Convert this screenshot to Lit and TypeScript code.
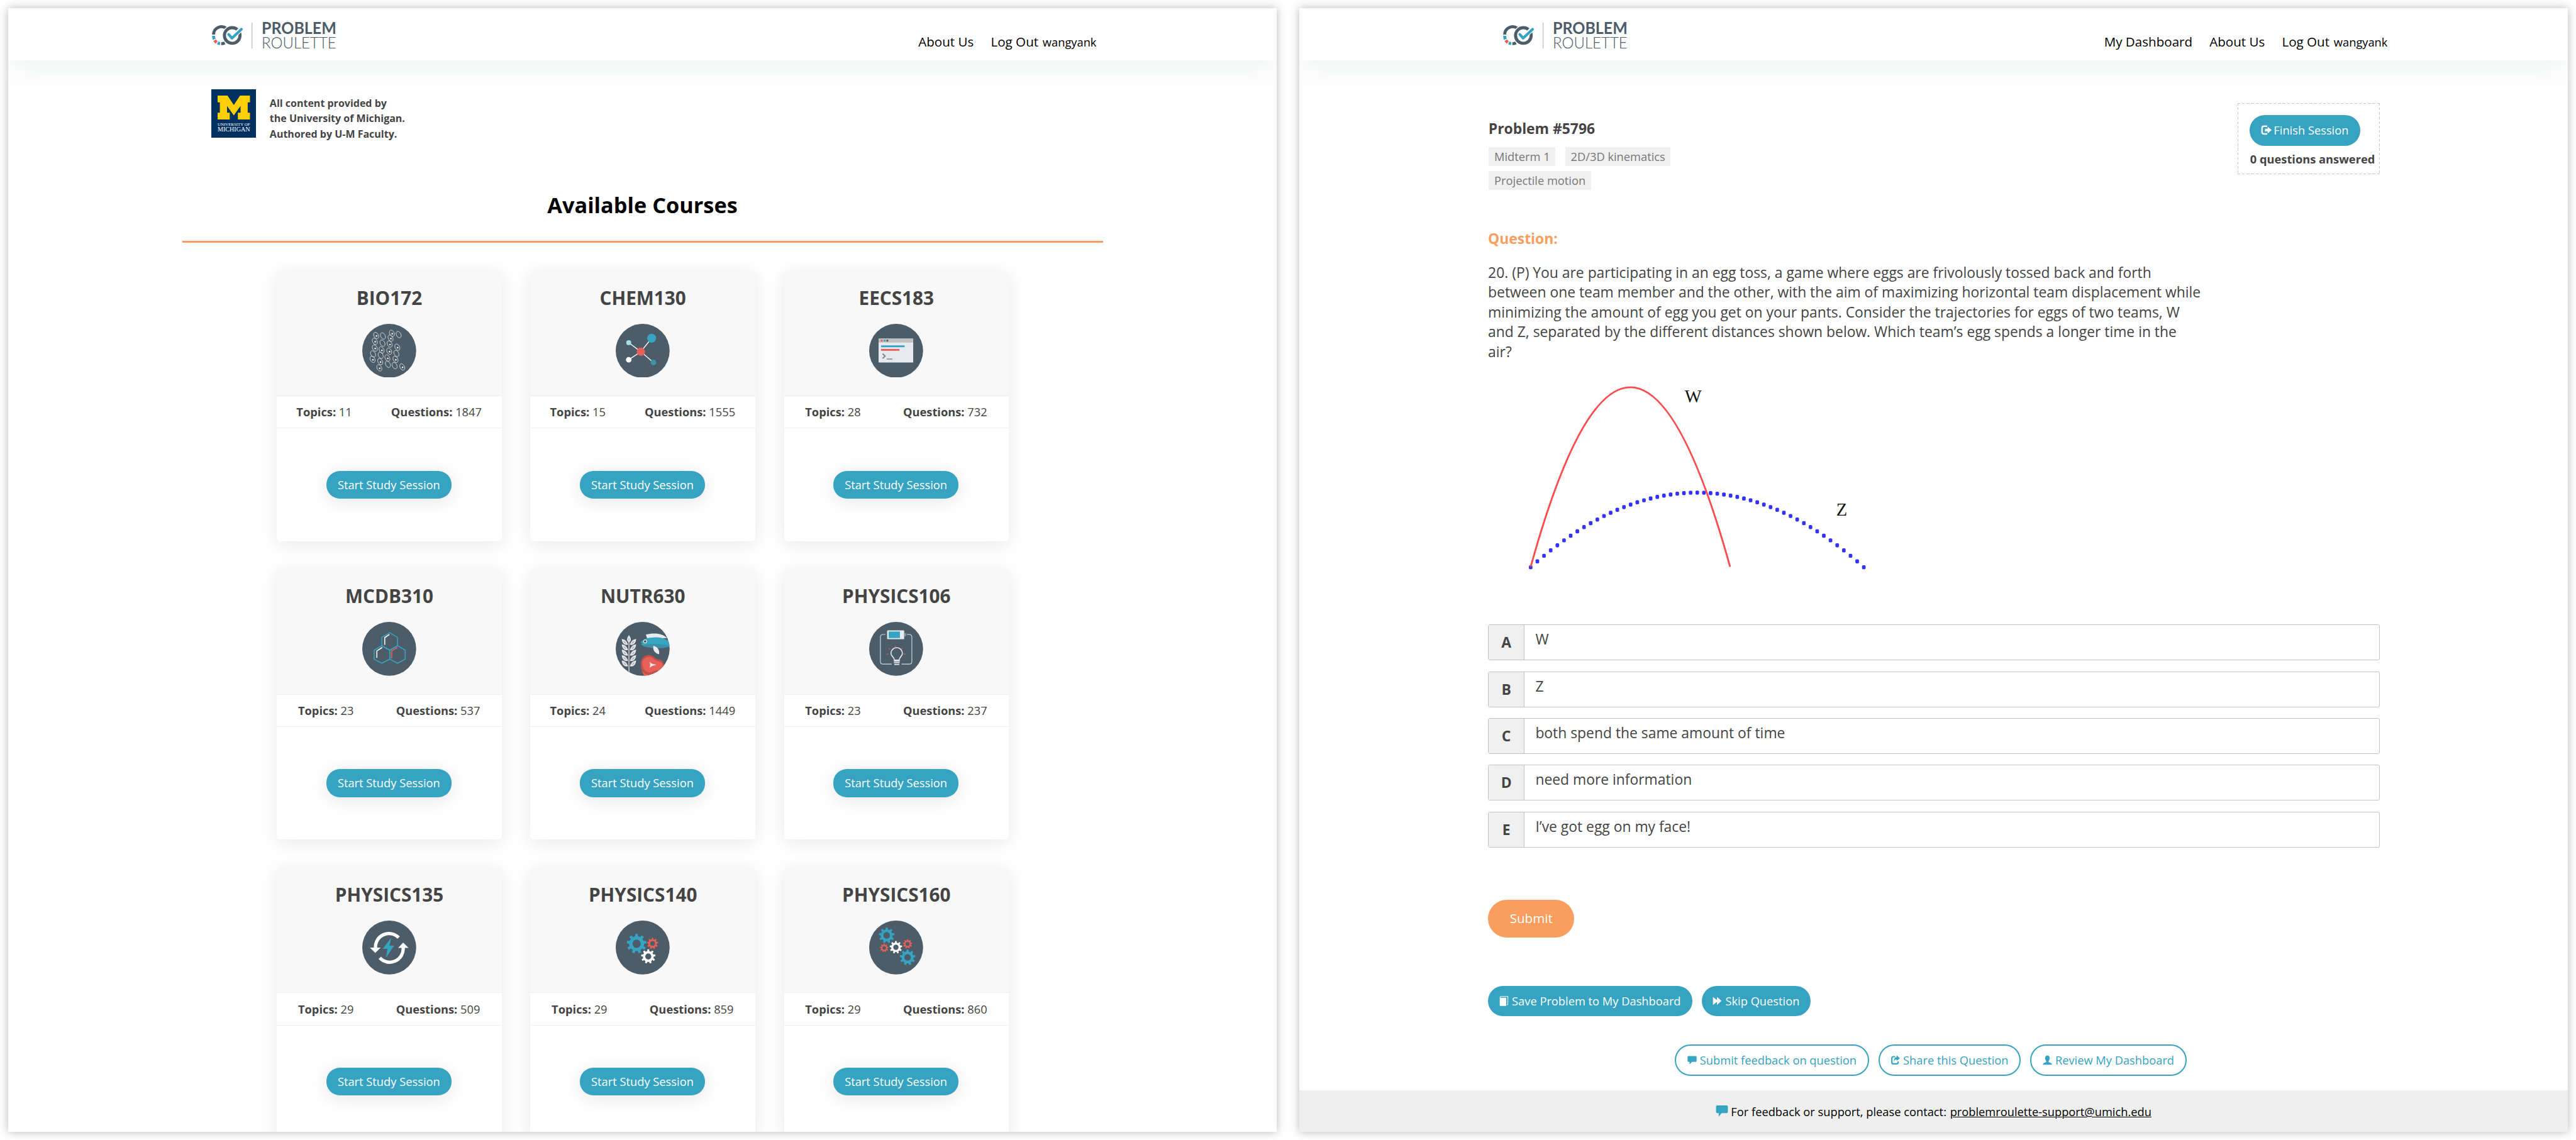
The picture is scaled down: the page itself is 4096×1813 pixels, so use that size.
import { LitElement, html, css, svg } from "lit";
import { customElement, property } from "lit/decorators.js";

const TEAL = "#35a3c1";
const SLATE = "#4c5c68";
const RED = "#e65f58";

// Closed outline of a gear: n teeth, outer radius r, centred on (cx, cy).
function gear(cx: number, cy: number, r: number, fill: string, n = 9) {
  const root = r * 0.76;
  const step = (Math.PI * 2) / n;
  const pts: string[] = [];
  for (let i = 0; i < n; i++) {
    const a = i * step - Math.PI / 2;
    const corners: [number, number][] = [
      [root, -0.27],
      [r, -0.19],
      [r, 0.19],
      [root, 0.27],
    ];
    for (const [rad, t] of corners) {
      const ang = a + t * step;
      pts.push(`${(cx + rad * Math.cos(ang)).toFixed(2)} ${(cy + rad * Math.sin(ang)).toFixed(2)}`);
    }
  }
  return svg`<path d="M${pts.join("L")}Z" fill=${fill}/><circle cx=${cx} cy=${cy} r=${r * 0.42} fill=${SLATE}/>`;
}

const CELLS: [number, number, number][] = [
  [31, 26, 1], [46, 27, 0], [66, 21, 1], [81, 24, 0], [28, 39, 1], [45, 43, 0],
  [63, 32, 1], [61, 45, 1], [78, 52, 1], [28, 54, 1], [43, 58, 1], [60, 61, 1],
  [76, 66, 0], [24, 67, 0], [41, 70, 0], [56, 76, 1], [23, 79, 1], [40, 84, 1],
  [57, 90, 0], [74, 79, 1], [72, 93, 0], [38, 98, 1], [89, 96, 1],
];

const wheatGrain = (x: number, y: number, flip: boolean) => svg`
  <g transform="translate(${x} ${y}) scale(${flip ? -1 : 1} 1)">
    <path d="M0 0C-3 -10 -8 -12 -14 -13C-13 -5 -10 1 0 0Z" fill="#e6e9ee"/>
    <path d="M-3.500 -2.500C-5 -7 -7 -8 -10.500 -9C-10 -5 -8 -3 -3.500 -2.500Z" fill="#b9b9b9"/>
  </g>`;

function artwork(name: string) {
  switch (name) {
    case "cells":
      return svg`<g fill="none" stroke="#dfe3e6" stroke-width="1.100">${CELLS.map(
        ([x, y, dot]) => svg`<ellipse cx=${x} cy=${y} rx="5" ry="7.600" transform="rotate(-28 ${x} ${y})"/>
          ${dot ? svg`<circle cx=${x + 0.8} cy=${y + 1} r="1.700" fill="#fff" stroke="none"/>` : ""}`
      )}</g>`;
    case "molecule":
      return svg`
        <path d="M29 42L56 62L80 32M29 80L56 62L84 86" stroke="#fff" stroke-width="2" fill="none"/>
        <circle cx="80" cy="32" r="10" fill=${TEAL}/><circle cx="29" cy="42" r="5.600" fill="#a3dbe8"/>
        <circle cx="56" cy="62" r="9.200" fill=${RED}/><circle cx="29" cy="80" r="6.200" fill="#fff"/>
        <circle cx="84" cy="86" r="6.200" fill="#428fa8"/>`;
    case "terminal":
      return svg`
        <rect x="21" y="33" width="77" height="53" rx="1" fill="#e6e9ee"/>
        <path d="M21 34a1 1 0 0 1 1-1h75a1 1 0 0 1 1 1v7.500H21z" fill="#c0c0c0"/>
        <circle cx="28" cy="37.300" r="2.300" fill=${RED}/><circle cx="34.500" cy="37.300" r="2.300" fill=${TEAL}/>
        <circle cx="40.500" cy="37.300" r="2.300" fill=${SLATE}/>
        <rect x="26.400" y="48" width="52.500" height="4" fill=${TEAL}/>
        <rect x="26.400" y="56" width="41" height="4" fill=${RED}/>
        <path d="M30 66.500L35.500 71.700L30 77" fill="none" stroke="#808080" stroke-width="2.600"/>
        <path d="M39 78.300H51.700" stroke="#808080" stroke-width="2"/>`;
    case "hexagons":
      return svg`<g fill="none" stroke-width="2.200">
        <g stroke=${TEAL}>
          <path d="M61 24L78.500 34.500V53L61 63L43.500 53V34.500Z"/>
          <path d="M43.500 53L61.500 63V83L43.500 92L26.500 83V63Z"/>
          <path d="M78.500 53L61.500 63V83L78.500 92L95.500 83V63Z"/>
        </g>
        <path d="M60.500 28L50 35V51M44.500 57L32.500 64.500V80" stroke="#fff"/>
        <path d="M78 57L65.500 64.500V81" stroke=${RED}/>
      </g>`;
    case "food":
      return svg`<defs><clipPath id="disc"><circle cx="60" cy="60" r="60"/></clipPath></defs>
      <g clip-path="url(#disc)">
        <path d="M29.500 44V120" stroke="#b9b9b9" stroke-width="2.600"/>
        ${[51, 63, 75, 87, 99].map((y) => svg`${wheatGrain(27.500, y, false)}${wheatGrain(31.500, y, true)}`)}
        <path d="M29.500 29.500C24 37 24 42 29.500 46C35 42 35 37 29.500 29.500Z" fill="#e6e9ee"/>
        <path d="M29.500 34.500C27.500 38 27.500 41 29.500 43C31.500 41 31.500 38 29.500 34.500Z" fill="#b9b9b9"/>
        <path d="M67 28.500C85 24 104 25 114 36L70 37Z" fill="#e6e9ee"/>
        <path d="M56 46C59 39 68 35 85 34.500C100 34 112 37 122 46V54C110 59 95 59 84 58C70 56 59 54 56 49L60 48Z" fill=${TEAL}/>
        <path d="M60 53C75 47 102 48 119 54C108 59 95 59 84 58C74 57 65 56 60 53Z" fill="#428fa8"/>
        <circle cx="65.500" cy="43.500" r="4" fill="#fff"/><circle cx="65.500" cy="43.500" r="2.600" fill="#3f4a52"/>
        <path d="M84 53C94 56 98 63 96.500 72C86 69 82 62 84 53Z" fill="#e6e9ee"/>
        <path d="M56 96C55 80 65 73.500 75 74C85 74.500 87 82 95 83.500C104 84 108 91 108 100L84 126C66 122 56 112 56 96Z" fill="#c24f49"/>
        <path d="M59 93C59 82 67 78 74 78C84 78 86 86 93 87.500C103 88 108 96 103 104C97 111 90 106 82 111C73 117 60 108 59 93Z" fill=${RED}/>
        <path d="M57 107C66 119 76 119 83 116C92 112 97 113 104 109L90 126H66Z" fill=${RED}/>
        <path d="M76 90C79 94 84 94.500 89 95.500C83 97 79 98 76 101.500C77.500 97 77.500 94 76 90Z" fill="#e6e9ee" stroke="#e6e9ee" stroke-width="1"/>
      </g>`;
    case "circuit":
      return svg`
        <path d="M36 28H31Q25 28 25 34V88Q25 94 31 94H50M72 94H89Q95 94 95 88V34Q95 28 89 28H84" fill="none" stroke="#d5dade" stroke-width="1.600"/>
        <rect x="40" y="19" width="38" height="19.500" rx="1.500" fill="#e6e9ee"/>
        <rect x="43.500" y="21.500" width="25" height="14.500" fill=${TEAL}/>
        <rect x="78" y="25" width="4" height="7" fill="#8c969e"/>
        <path d="M56 85C56 78 48.500 77 48.500 70A12.500 12.500 0 0 1 74 70C74 77 67 78 67 85Z" fill="none" stroke="#e6e9ee" stroke-width="2.200"/>
        <path d="M55 87H68M55 90.500H68M56 94.500H67" stroke="#e6e9ee" stroke-width="2.400"/>
        <path d="M58.500 53V57M43.500 58.500L46 61M74.500 58.500L72 61M39 71.500H43M77 71.500H81" stroke=${RED} stroke-width="1.600"/>`;
    case "energy":
      return svg`
        <g fill="none" stroke="#fff" stroke-width="7.400">
          <path d="M81 38A30 30 0 0 0 29.500 61"/><path d="M39 83A30 30 0 0 0 91 60"/>
        </g>
        <path d="M17 60H41L29 72ZM80 61H103L91 49Z" fill="#fff"/>
        <path d="M64.500 38L45.500 63H56L53 82.500L71 55.500H60.500Z" fill=${TEAL}/>`;
    case "gears":
      return svg`${gear(46.5, 51.5, 22, TEAL, 9)}${gear(82, 51, 12.5, RED)}${gear(72.500, 80, 16, "#fff")}`;
    default:
      return svg`${gear(39, 33, 17.5, TEAL)}${gear(85.500, 52, 10.5, RED)}${gear(33.500, 61, 9.5, RED)}
        ${gear(59.500, 59.500, 14, "#fff")}${gear(85.500, 82, 17.5, TEAL)}`;
  }
}

const GLYPHS: Record<string, unknown> = {
  out: svg`<path d="M14 2.500H6.500Q2.500 2.500 2.500 6.500V15.500Q2.500 19.500 6.500 19.500H14" fill="none" stroke="currentColor" stroke-width="3.400"/><path d="M9 8H15V3.500L24 11L15 18.500V14H9Z" fill="currentColor"/>`,
  book: svg`<path d="M1 3.500L3 1H19V18L17.500 20" fill="none" stroke="currentColor" stroke-width="1.600"/><rect x="1" y="4" width="14.500" height="18" rx="1" fill="currentColor"/>`,
  forward: svg`<path d="M1 2L10 9V2L20 11L10 20V13L1 20Z" fill="currentColor"/>`,
  comment: svg`<path d="M2.500 2H18.500Q20.500 2 20.500 4V13Q20.500 15 18.500 15H10L5 21V15H2.500Q.5 15 .5 13V4Q.5 2 2.500 2Z" fill="currentColor"/>`,
  share: svg`<path d="M10.500 3.500H6.500Q3 3.500 3 7V16Q3 19.500 6.500 19.500H13.500Q17 19.500 17 16V14" fill="none" stroke="currentColor" stroke-width="3"/><path d="M13.500 .500L21 7L13.500 13V9.500Q10 9.500 7.500 14Q7.500 5 13.500 4.500Z" fill="currentColor"/>`,
  user: svg`<path d="M10.500 1C14.500 1 15.500 4 15.500 7C15.500 10 14 12 13 13.500V15.500L18 17.500Q20.500 18.500 20.500 21.500H.5Q.5 18.500 3 17.500L8 15.500V13.500C7 12 5.500 10 5.500 7C5.500 4 6.500 1 10.500 1Z" fill="currentColor"/>`,
};

const glyph = (name: string) => html`<svg class="glyph ${name}" viewBox="0 0 24 22">${GLYPHS[name]}</svg>`;

@customElement("site-header")
class SiteHeader extends LitElement {
  @property({ type: Boolean }) dashboard = false;

  static styles = css`
    :host { display: block; }
    .bar {
      display: flex; justify-content: space-between; align-items: flex-start;
      box-sizing: border-box; height: 116px; padding: 17px 401px 0 452px;
      background: #fff; box-shadow: 0 20px 60px rgba(60, 80, 105, 0.07);
    }
    .logo { width: 290px; height: 90px; display: block; overflow: visible; }
    .nav { display: flex; gap: 38px; margin-top: 36px; font-size: 28.8px; line-height: 44px; color: #000; white-space: nowrap; }
    .user { font-size: 25.6px; margin-left: 2px; }
  `;

  render() {
    return html`<header class="bar">
      <svg class="logo" viewBox="470 35 290 90">
        <g fill="none" stroke-width="6.800">
          <path d="M503 63A17.500 17.500 0 0 0 475 77" stroke=${SLATE}/>
          <path d="M475 79.500A18 18 0 0 0 476.500 87.500" stroke=${TEAL}/>
          <path d="M477.500 89.500A18 18 0 0 0 482 94.500" stroke=${RED}/>
          <path d="M484 95.500A18 18 0 0 0 489.500 97" stroke=${TEAL}/>
          <path d="M492 97A18 18 0 0 0 500 95.500" stroke=${SLATE}/>
          <circle cx="516.500" cy="79" r="17.700" stroke="#fff" stroke-width="10"/>
          <circle cx="516.500" cy="79" r="17.400" stroke=${SLATE}/>
          <path d="M508.500 76L516 85L536 64.500" stroke="#fff" stroke-width="10.500" stroke-linecap="round"/>
          <path d="M508.500 76.500L516 85L537 65" stroke=${TEAL} stroke-width="6" stroke-linecap="round" stroke-linejoin="round"/>
        </g>
        <path d="M560.500 50V108" stroke="#9aa4ac" stroke-width="1.200"/>
        <text x="582" y="76" font-family="Lato, sans-serif" font-weight="700" font-size="36" textLength="166" lengthAdjust="spacingAndGlyphs" fill=${SLATE}>PROBLEM</text>
        <text x="582" y="108" font-family="Lato, sans-serif" font-weight="300" font-size="35" textLength="166" lengthAdjust="spacingAndGlyphs" fill=${SLATE}>ROULETTE</text>
      </svg>
      <nav class="nav">
        ${this.dashboard ? html`<span>My Dashboard</span>` : ""}
        <span>About Us</span>
        <span>Log Out <span class="user">wangyank</span></span>
      </nav>
    </header>`;
  }
}

@customElement("course-card")
class CourseCard extends LitElement {
  @property() name = "";
  @property({ type: Number }) topics = 0;
  @property({ type: Number }) questions = 0;
  @property() art = "";

  static styles = css`
    :host { display: block; }
    .card {
      display: flex; flex-direction: column; height: 600px; border-radius: 8px; overflow: hidden;
      background: #fff; box-shadow: 0 6px 40px rgba(0, 0, 0, 0.09);
    }
    .head {
      display: flex; flex-direction: column; align-items: center; gap: 29px;
      padding: 31px 0 40px; background: #f8f8f8; border-bottom: 2px solid #efefef;
    }
    .name { font-size: 41.6px; line-height: 56px; font-weight: 700; }
    .art { display: block; width: 120px; height: 120px; }
    .stats {
      display: flex; justify-content: space-around; align-items: center; box-sizing: border-box;
      height: 72px; padding: 0 1px 1px 0; border-bottom: 2px solid #efefef; font-size: 25.6px;
    }
    .foot { flex: 1; display: flex; align-items: center; justify-content: center; padding-right: 2px; }
    .start {
      box-sizing: border-box; width: 278px; height: 62px; border-radius: 30px; text-align: center;
      font-size: 25.6px; line-height: 61px; color: #fff; background: #35a3c1; font-weight: 500;
      box-shadow: 0 6px 40px rgba(0, 0, 0, 0.1);
    }
  `;

  render() {
    return html`<article class="card">
      <div class="head">
        <div class="name">${this.name}</div>
        <svg class="art" viewBox="0 0 120 120"><circle cx="60" cy="60" r="60" fill=${SLATE}/>${artwork(this.art)}</svg>
      </div>
      <div class="stats">
        <span><b>Topics:</b> ${this.topics}</span>
        <span><b>Questions:</b> ${this.questions}</span>
      </div>
      <div class="foot"><div class="start">Start Study Session</div></div>
    </article>`;
  }
}

@customElement("course-page")
class CoursePage extends LitElement {
  static styles = css`
    :host { display: block; }
    .intro { display: flex; gap: 30px; height: 224px; padding: 64px 0 0 452px; }
    .crest { display: block; width: 100px; height: 108px; }
    .credit { margin-top: 14.500px; font-size: 22.4px; line-height: 34.3px; font-weight: 700; }
    .title { text-align: center; font-size: 48px; line-height: 66px; font-weight: 700; color: #000; }
    .rule { width: 2048px; height: 4px; margin: 48px 0 64px 388px; background: #f99e5e; }
    .grid { display: grid; grid-template-columns: repeat(3, 500px); gap: 64px; padding-left: 598px; }
  `;

  courses = [
    ["BIO172", 11, 1847, "cells"],
    ["CHEM130", 15, 1555, "molecule"],
    ["EECS183", 28, 732, "terminal"],
    ["MCDB310", 23, 537, "hexagons"],
    ["NUTR630", 24, 1449, "food"],
    ["PHYSICS106", 23, 237, "circuit"],
    ["PHYSICS135", 29, 509, "energy"],
    ["PHYSICS140", 29, 859, "gears"],
    ["PHYSICS160", 29, 860, "geartrain"],
  ];

  render() {
    return html`
      <site-header></site-header>
      <div class="intro">
        <svg class="crest" viewBox="0 0 100 108">
          <rect width="100" height="108" fill="#00305f"/>
          <path d="M14 14H36L50 35L64 14H86V29H81V52H86V67H59V52H65V37L50 58L35 37V52H41V67H14V52H19V29H14Z" fill="#ffcf06"/>
          <text x="14" y="81" font-family="'Liberation Serif', serif" font-size="10" textLength="72" lengthAdjust="spacingAndGlyphs" fill="#fff">UNIVERSITY OF</text>
          <text x="14" y="94" font-family="'Liberation Serif', serif" font-size="15.500" textLength="72" lengthAdjust="spacingAndGlyphs" fill="#fff">MICHIGAN</text>
        </svg>
        <div class="credit">All content provided by<br />the University of Michigan.<br />Authored by U-M Faculty.</div>
      </div>
      <div class="title">Available Courses</div>
      <div class="rule"></div>
      <div class="grid">
        ${this.courses.map(
          ([name, topics, questions, art]) =>
            html`<course-card .name=${name} .topics=${topics} .questions=${questions} .art=${art}></course-card>`
        )}
      </div>`;
  }
}

@customElement("trajectory-chart")
class TrajectoryChart extends LitElement {
  static styles = css`
    :host { display: block; }
    .chart { display: block; width: 900px; height: 586px; }
    .label { font-family: "Liberation Serif", serif; font-size: 40px; fill: #111; }
  `;

  render() {
    const dots = Array.from({ length: 51 }, (_, i) => {
      const t = (i - 25) / 25;
      return [95 + i * 14.82, 293 + 166 * t * t];
    });
    return html`<svg class="chart" viewBox="0 0 900 586">
      ${dots.map(([x, y]) => svg`<rect x=${x - 4} y=${y - 4.5} width="8" height="9" rx="2.500" fill="#3333ff"/>`)}
      <path d="M95 458Q316.500 -341 538.500 458" fill="none" stroke="#ff4b4b" stroke-width="4"/>
      <text class="label" x="437.500" y="92">W</text>
      <text class="label" x="774.500" y="344">Z</text>
    </svg>`;
  }
}

@customElement("problem-page")
class ProblemPage extends LitElement {
  static styles = css`
    :host { display: flex; flex-direction: column; height: 100%; }
    .main { flex: 1; box-sizing: border-box; width: 2404px; padding: 96px 0 0 420px; }
    .top { display: flex; justify-content: space-between; height: 278.600px; }
    .info { width: 420px; padding: 35px 0 0 2px; }
    .number { font-size: 32px; line-height: 44px; font-weight: 700; margin-left: -1px; }
    .tags { display: flex; flex-wrap: wrap; gap: 10px 22px; margin-top: 19px; }
    .tag { box-sizing: border-box; height: 42px; padding: 0 12px; line-height: 41px; font-size: 25.6px; color: #777; background: #f0f0f0; white-space: nowrap; }
    .session {
      box-sizing: border-box; width: 316px; height: 158px; padding: 26px;
      --across: repeating-linear-gradient(90deg, #c9c9c9 0 6px, transparent 6px 10px);
      --down: repeating-linear-gradient(180deg, #c9c9c9 0 6px, transparent 6px 10px);
      background: var(--across) top / 100% 2px no-repeat, var(--across) bottom / 100% 2px no-repeat,
        var(--down) left / 2px 100% no-repeat, var(--down) right / 2px 100% no-repeat;
    }
    .session .btn { height: 68px; line-height: 67px; width: 246px; }
    .count { margin: 12px 0 0 1px; font-size: 25.6px; line-height: 36px; font-weight: 700; white-space: nowrap; }
    .btn {
      display: flex; align-items: center; justify-content: center; box-sizing: border-box;
      height: 67px; border-radius: 34px; font-size: 25.6px; line-height: 66px; font-weight: 500;
      color: #fff; background: #35a3c1; white-space: nowrap;
    }
    .glyph { width: 24px; height: 22px; margin-right: 4px; overflow: visible; }
    .question { font-size: 32px; line-height: 44px; font-weight: 700; color: #f99e5e; margin-bottom: 32px; }
    .text { font-size: 32px; line-height: 44px; height: 219px; white-space: nowrap; }
    .options { display: flex; flex-direction: column; gap: 24px; }
    .option { display: flex; box-sizing: border-box; height: 80px; border: 2px solid #c3c3c3; border-radius: 4px; font-size: 32px; }
    .letter { box-sizing: border-box; width: 80px; border-right: 2px solid #c3c3c3; background: #f0f0f0; text-align: center; font-weight: 700; line-height: 78px; }
    .answer { padding-left: 24px; line-height: 64px; }
    .submit { width: 192px; height: 84px; margin-top: 116px; border-radius: 42px; background: #f99e5e; font-size: 28.8px; }
    .row { display: flex; gap: 21px; margin-top: 108px; }
    .save { width: 454px; }
    .skip { width: 243px; }
    .links { display: flex; gap: 21.500px; margin: 63px 0 0 416px; }
    .line { height: 70px; border: 2.800px solid #35a3c1; border-radius: 35px; background: #fff; color: #35a3c1; }
    .feedback { width: 431px; }
    .share-link { width: 316px; }
    .review { width: 348px; }
    .footer { display: flex; align-items: center; justify-content: center; height: 92px; padding-top: 1px; box-sizing: border-box; background: #efefef; color: #000; font-size: 25.6px; }
    .footer .glyph { width: 32px; height: 29px; color: #35a3c1; margin-right: 2px; margin-top: -4px; }
    .mail { text-decoration: underline; text-decoration-thickness: 2px; margin-left: 8px; }
  `;

  answers = ["W", "Z", "both spend the same amount of time", "need more information", "I’ve got egg on my face!"];

  render() {
    return html`
      <site-header dashboard></site-header>
      <div class="main">
        <div class="top">
          <div class="info">
            <div class="number">Problem #5796</div>
            <div class="tags">
              ${["Midterm 1", "2D/3D kinematics", "Projectile motion"].map((t) => html`<span class="tag">${t}</span>`)}
            </div>
          </div>
          <div class="session">
            <div class="btn">${glyph("out")}<span>Finish Session</span></div>
            <div class="count">0 questions answered</div>
          </div>
        </div>
        <div class="question">Question:</div>
        <div class="text">20. (P) You are participating in an egg toss, a game where eggs are frivolously tossed back and forth<br />between one team member and the other, with the aim of maximizing horizontal team displacement while<br />minimizing the amount of egg you get on your pants. Consider the trajectories for eggs of two teams, W<br />and Z, separated by the different distances shown below. Which team’s egg spends a longer time in the<br />air?</div>
        <trajectory-chart></trajectory-chart>
        <div class="options">
          ${this.answers.map(
            (a, i) => html`<div class="option"><div class="letter">${"ABCDE"[i]}</div><div class="answer">${a}</div></div>`
          )}
        </div>
        <div class="btn submit">Submit</div>
        <div class="row">
          <div class="btn save">${glyph("book")}<span>Save Problem to My Dashboard</span></div>
          <div class="btn skip">${glyph("forward")}<span>Skip Question</span></div>
        </div>
        <div class="links">
          <div class="btn line feedback">${glyph("comment")}<span>Submit feedback on question</span></div>
          <div class="btn line share-link">${glyph("share")}<span>Share this Question</span></div>
          <div class="btn line review">${glyph("user")}<span>Review My Dashboard</span></div>
        </div>
      </div>
      <div class="footer">${glyph("comment")}<span>For feedback or support, please contact:</span><span class="mail">problemroulette-support@umich.edu</span></div>`;
  }
}

@customElement("app-root")
class AppRoot extends LitElement {
  static styles = css`
    :host { display: block; width: 4096px; height: 1813px; overflow: hidden; background: #fff; }
    .board {
      display: flex; gap: 50px; box-sizing: border-box; width: 5730px; height: 2536px; padding: 18px;
      zoom: calc(4096 / 5730);
      font-family: "Open Sans", "Noto Sans", sans-serif; color: #444;
    }
    .panel { width: 2822px; height: 2500px; overflow: hidden; background: #fff; box-shadow: 0 0 20px rgba(0, 0, 0, 0.28); }
  `;

  render() {
    return html`<div class="board">
      <div class="panel"><course-page></course-page></div>
      <div class="panel"><problem-page></problem-page></div>
    </div>`;
  }
}
